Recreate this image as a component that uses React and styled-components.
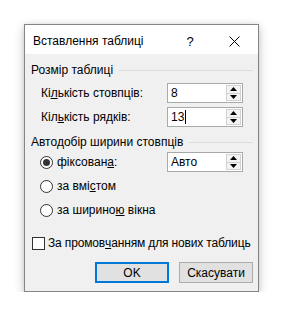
import React from "react";
import styled, { createGlobalStyle } from "styled-components";

const Global = createGlobalStyle`
  html, body { margin: 0; padding: 0; background: #ffffff; }
  body { font-family: "Liberation Sans", Arial, sans-serif; font-size: 12px; color: #000; }
  * { box-sizing: border-box; }
`;

const Page = styled.div`
  padding: 24px 0 0 24px;
`;

const Dialog = styled.div`
  width: 235px;
  border: 1px solid #858585;
  background: #f0f0f0;
  box-shadow: 0 3px 10px rgba(0, 0, 0, 0.22), 0 0 4px rgba(0, 0, 0, 0.08);
`;

const TitleBar = styled.div`
  height: 29px;
  background: #ffffff;
  display: flex;
  align-items: center;
  padding-left: 8px;
  padding-top: 3px;
`;

const Title = styled.div`
  flex: 1;
  font-size: 12px;
  white-space: nowrap;
`;

const Help = styled.div`
  width: 14px;
  margin-right: 31px;
  font-size: 13px;
  text-align: center;
`;

const Close = styled.div`
  width: 12px;
  height: 12px;
  margin-right: 18px;
  display: flex;
  align-items: center;
  justify-content: center;
`;

const Body = styled.div`
  padding: 8px 5px 8px 6px;
  display: flex;
  flex-direction: column;
`;

const Heading = styled.div`
  display: flex;
  align-items: center;
  height: 16px;
  margin-top: ${(p) => p.$mt || 0}px;
  white-space: nowrap;
  &::after {
    content: "";
    flex: 1;
    height: 1px;
    background: #dcdcdc;
    margin-left: 6px;
  }
`;

const FieldRow = styled.div`
  display: flex;
  align-items: center;
  height: ${(p) => p.$h || 20}px;
  margin-top: ${(p) => p.$mt || 0}px;
  padding-left: 10px;
`;

const Label = styled.div`
  width: 126px;
  flex-shrink: 0;
  white-space: nowrap;
`;

const SpinBox = styled.div`
  width: 76px;
  height: 20px;
  flex-shrink: 0;
  border: 1px solid #a9a9a9;
  background: #ffffff;
  display: flex;
  align-items: stretch;
  padding: 1px;
`;

const SpinText = styled.div`
  flex: 1;
  padding-left: 2px;
  display: flex;
  align-items: center;
  line-height: 16px;
`;

const Caret = styled.span`
  display: inline-block;
  width: 1px;
  height: 14px;
  background: #000;
  margin-left: 1px;
`;

const SpinButtons = styled.div`
  width: 15px;
  display: flex;
  flex-direction: column;
`;

const SpinBtn = styled.div`
  flex: 1;
  border: 1px solid #d2d2d2;
  background: #f3f3f3;
  display: flex;
  align-items: center;
  justify-content: center;
  & + & { border-top: none; }
`;

const RadioRow = styled.div`
  display: flex;
  align-items: center;
  height: 24px;
  padding-left: 9px;
  margin-top: ${(p) => p.$mt || 0}px;
`;

const RadioCircle = styled.div`
  width: 13px;
  height: 13px;
  flex-shrink: 0;
  border-radius: 50%;
  border: 1px solid #333333;
  background: #ffffff;
  display: flex;
  align-items: center;
  justify-content: center;
  margin-right: 4px;
  &::after {
    content: "";
    display: ${(p) => (p.$checked ? "block" : "none")};
    width: 7px;
    height: 7px;
    border-radius: 50%;
    background: #333333;
  }
`;

const RadioLabel = styled.div`
  width: ${(p) => (p.$w ? p.$w + "px" : "auto")};
  flex-shrink: 0;
  white-space: nowrap;
`;

const CheckRow = styled.div`
  display: flex;
  align-items: center;
  height: 16px;
  margin-top: 13px;
  padding-left: 1px;
  white-space: nowrap;
  letter-spacing: -0.15px;
`;

const CheckBox = styled.div`
  width: 13px;
  height: 13px;
  flex-shrink: 0;
  border: 1px solid #333333;
  background: #ffffff;
  margin-right: 3px;
`;

const Buttons = styled.div`
  display: flex;
  justify-content: flex-end;
  gap: 10px;
  margin-top: 11px;
`;

const Button = styled.div`
  width: 74px;
  height: 21px;
  background: #e1e1e1;
  border: ${(p) => (p.$primary ? "2px solid #0078d7" : "1px solid #adadad")};
  display: flex;
  align-items: center;
  justify-content: center;
`;

const Arrow = ({ down }) => (
  <svg width="7" height="4" viewBox="0 0 7 4">
    <polygon points={down ? "0,0 7,0 3.5,4" : "0,4 7,4 3.5,0"} fill="#000" />
  </svg>
);

const Spin = ({ value, caret }) => (
  <SpinBox>
    <SpinText>
      {value}
      {caret && <Caret />}
    </SpinText>
    <SpinButtons>
      <SpinBtn><Arrow /></SpinBtn>
      <SpinBtn><Arrow down /></SpinBtn>
    </SpinButtons>
  </SpinBox>
);

export default function App() {
  return (
    <Page>
      <Global />
      <Dialog>
        <TitleBar>
          <Title>Вставлення таблиці</Title>
          <Help>?</Help>
          <Close>
            <svg width="11" height="11" viewBox="0 0 11 11">
              <path d="M0.5 0.5 L10.5 10.5 M10.5 0.5 L0.5 10.5" stroke="#000" strokeWidth="1" />
            </svg>
          </Close>
        </TitleBar>
        <Body>
          <Heading>Розмір таблиці</Heading>
          <FieldRow $mt={5}>
            <Label>Кі<u>л</u>ькість стовпців:</Label>
            <Spin value="8" />
          </FieldRow>
          <FieldRow $mt={4}>
            <Label>Кіл<u>ь</u>кість рядків:</Label>
            <Spin value="13" caret />
          </FieldRow>
          <Heading $mt={7}>Автодобір ширини стовпців</Heading>
          <RadioRow>
            <RadioCircle $checked />
            <RadioLabel $w={110}>фіксован<u>а</u>:</RadioLabel>
            <Spin value="Авто" />
          </RadioRow>
          <RadioRow>
            <RadioCircle />
            <RadioLabel>за вмі<u>с</u>том</RadioLabel>
          </RadioRow>
          <RadioRow>
            <RadioCircle />
            <RadioLabel>за ширино<u>ю</u> вікна</RadioLabel>
          </RadioRow>
          <CheckRow>
            <CheckBox />
            За промов<u>ч</u>анням для нових таблиць
          </CheckRow>
          <Buttons>
            <Button $primary>OK</Button>
            <Button>Скасувати</Button>
          </Buttons>
        </Body>
      </Dialog>
    </Page>
  );
}
